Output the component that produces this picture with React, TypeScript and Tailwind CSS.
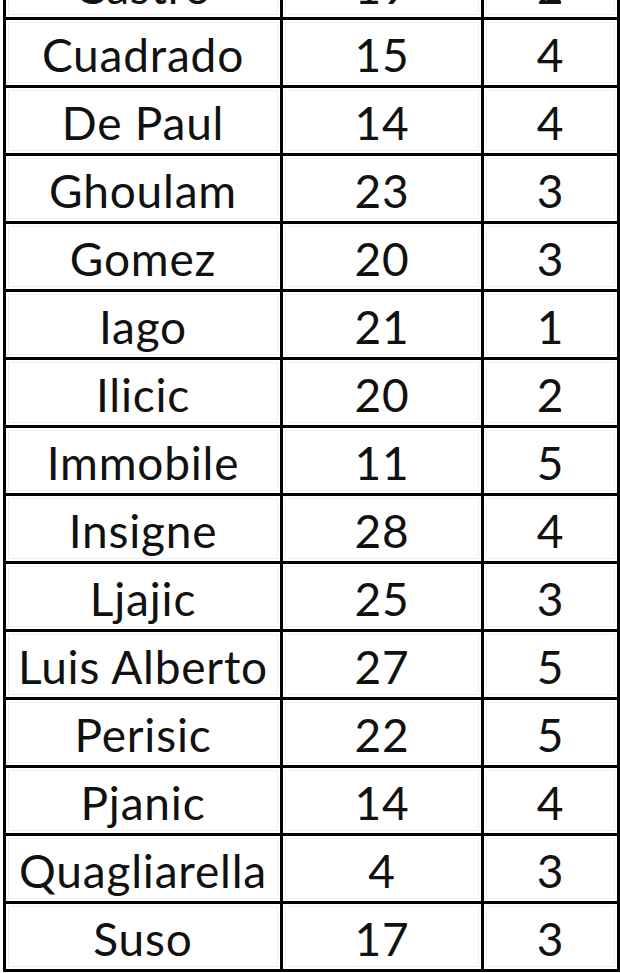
import React from "react";

const rows: [string, string, string][] = [
  ["Castro", "19", "2"],
  ["Cuadrado", "15", "4"],
  ["De Paul", "14", "4"],
  ["Ghoulam", "23", "3"],
  ["Gomez", "20", "3"],
  ["Iago", "21", "1"],
  ["Ilicic", "20", "2"],
  ["Immobile", "11", "5"],
  ["Insigne", "28", "4"],
  ["Ljajic", "25", "3"],
  ["Luis Alberto", "27", "5"],
  ["Perisic", "22", "5"],
  ["Pjanic", "14", "4"],
  ["Quagliarella", "4", "3"],
  ["Suso", "17", "3"],
];

function Cell({ children }: { children: React.ReactNode }) {
  return (
    <div className="bg-white h-[65px] p-[2px]">
      <div className="h-full border border-[#eeeeee] flex items-center justify-center pt-[4px] text-[#111] whitespace-nowrap">
        {children}
      </div>
    </div>
  );
}

export default function App() {
  return (
    <div className="w-[620px] h-[973px] overflow-hidden bg-white">
      <div
        className="ml-[3px] mt-[-51px] w-[617px] bg-black p-[3px] grid grid-cols-[274px_198px_133px] gap-[3px] text-[46px] leading-none tracking-[0.8px]"
        style={{ fontFamily: "Lato, 'Open Sans', sans-serif" }}
      >
        {rows.map(([n, a, b]) => (
          <React.Fragment key={n}>
            <Cell>{n}</Cell>
            <Cell>{a}</Cell>
            <Cell>{b}</Cell>
          </React.Fragment>
        ))}
      </div>
    </div>
  );
}
